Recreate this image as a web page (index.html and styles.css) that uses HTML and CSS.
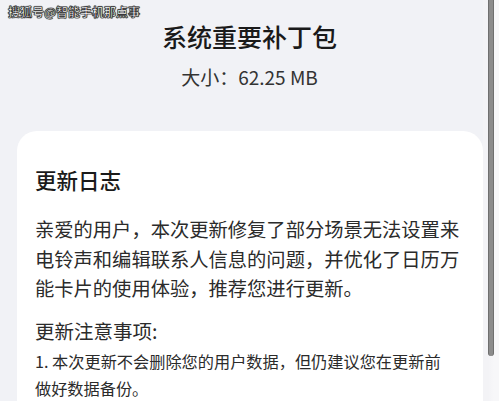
FILE: index.html
```html
<!DOCTYPE html>
<html lang="zh-CN">
<head>
<meta charset="utf-8">
<title>系统重要补丁包</title>
<link rel="stylesheet" href="styles.css">
</head>
<body>
<div class="watermark">搜狐号@智能手机那点事</div>
<header class="head">
  <h1 class="title">系统重要补丁包</h1>
  <div class="size">大小：62.25 MB</div>
</header>
<section class="card">
  <h2 class="card-title">更新日志</h2>
  <p class="para">亲爱的用户，本次更新修复了部分场景无法设置来电铃声和编辑联系人信息的问题，并优化了日历万能卡片的使用体验，推荐您进行更新。</p>
  <h3 class="notes-title">更新注意事项:</h3>
  <p class="note">1. 本次更新不会删除您的用户数据，但仍建议您在更新前做好数据备份。</p>
</section>
<div class="track"><div class="thumb"></div></div>
</body>
</html>
```
FILE: styles.css
```css
html, body {
  margin: 0;
  padding: 0;
  height: 100%;
  overflow: hidden;
}
body {
  background: #f1f2f6;
  font-family: "Noto Sans CJK SC", "Noto Sans", sans-serif;
  color: #222;
  position: relative;
}
.watermark {
  position: absolute;
  left: 8px;
  top: 4px;
  font-size: 12px;
  line-height: 16px;
  font-weight: 700;
  color: #fff;
  -webkit-text-stroke: 0.6px #333;
  text-shadow: 0 0 1px #000, 0 0 1px #000;
}
.head {
  display: flex;
  flex-direction: column;
  align-items: center;
  padding-top: 20px;
}
.title {
  margin: 0;
  font-size: 25px;
  line-height: 33px;
  font-weight: 500;
  color: #1a1a1a;
}
.size {
  margin-top: 10px;
  font-size: 19px;
  line-height: 27px;
  color: #333;
}
.card {
  margin: 41px 16px 0 17px;
  background: #fff;
  border-radius: 20px;
  padding: 35px 18px 40px 18px;
  min-height: 300px;
}
.card-title {
  margin: 0;
  font-size: 21.5px;
  line-height: 28px;
  font-weight: 500;
  color: #1a1a1a;
}
.para {
  margin: 21px 0 0 0;
  font-size: 19.3px;
  line-height: 29.5px;
  color: #2b2b2b;
}
.notes-title {
  margin: 14px 0 0 0;
  font-size: 19.5px;
  line-height: 26px;
  font-weight: 400;
  color: #2b2b2b;
}
.note {
  margin: 4px 0 0 0;
  padding-right: 10px;
  font-size: 16.2px;
  line-height: 27px;
  color: #2b2b2b;
}
.track {
  position: absolute;
  top: 0;
  right: 0;
  width: 16px;
  height: 100%;
  background: linear-gradient(to right, #f3f3f6 0, #f3f3f6 5px, #f7f7f9 11px, #f7f7f9 100%);
}
.thumb {
  position: absolute;
  left: 5px;
  top: 0;
  width: 6px;
  height: 356px;
  background: #8c8c8c;
  border-left: 1px solid #6f6f6f;
  border-right: 1px solid #6f6f6f;
  box-sizing: border-box;
  border-radius: 0 0 3px 3px;
}
```
